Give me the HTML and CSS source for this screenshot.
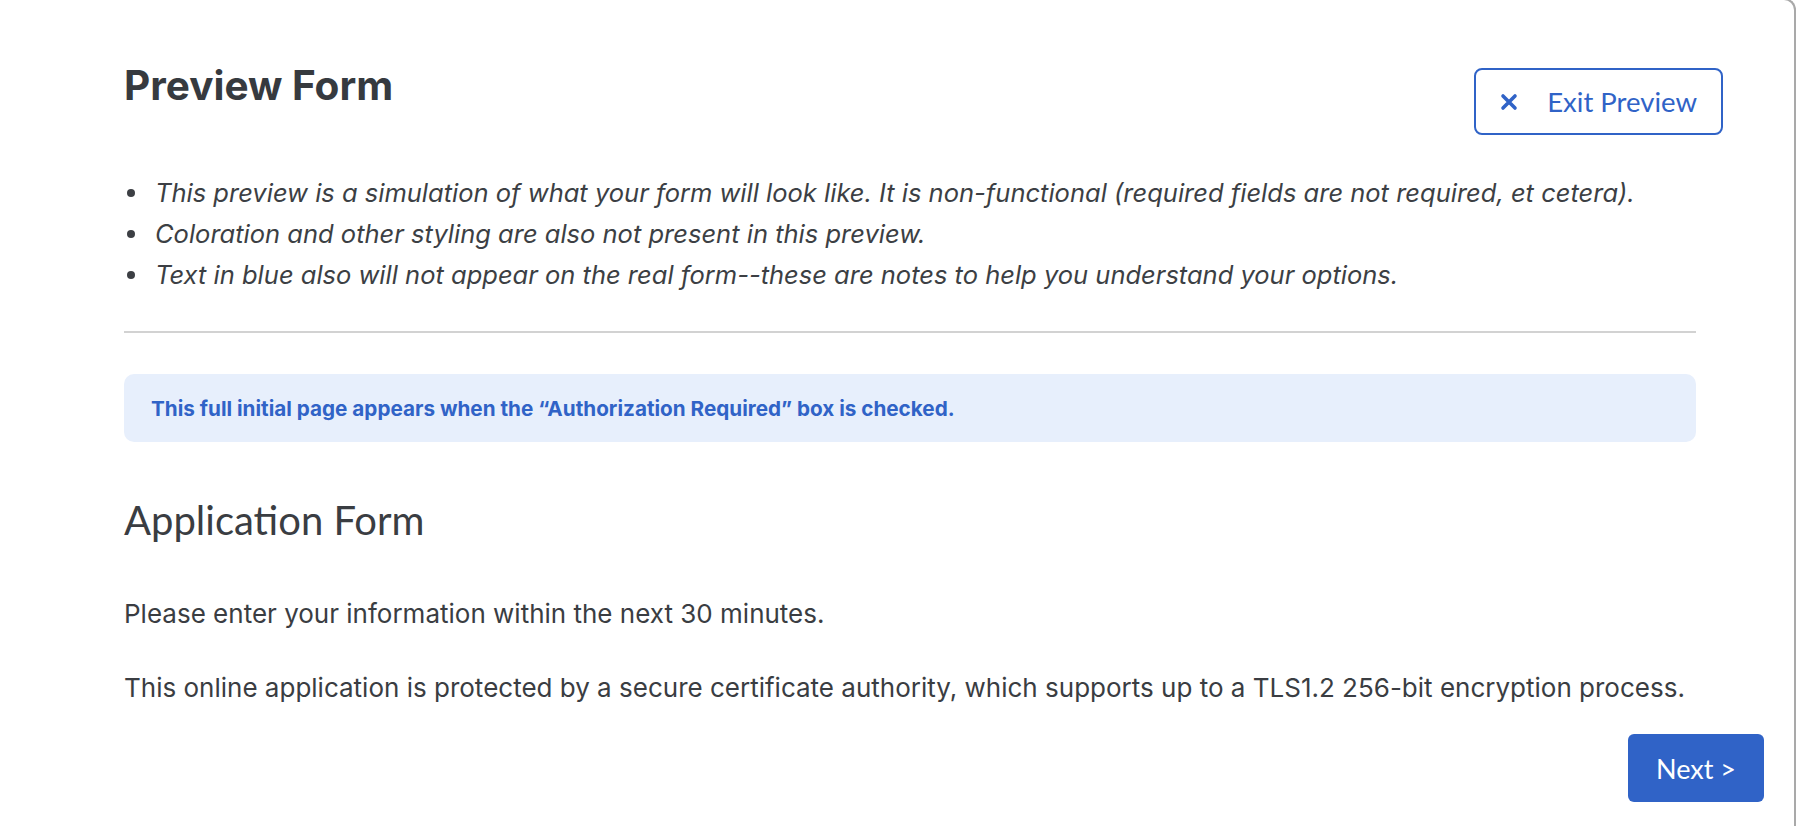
FILE: index.html
```html
<!DOCTYPE html>
<html lang="en">
<head>
<meta charset="utf-8">
<title>Preview Form</title>
<link rel="stylesheet" href="styles.css">
</head>
<body>
<div class="card">
  <header class="top">
    <h1 class="title">Preview Form</h1>
    <button class="btn-outline" type="button">
      <svg class="x-icon" width="18" height="18" viewBox="0 0 18 18" aria-hidden="true"><path d="M3 3 L15 15 M15 3 L3 15" stroke="currentColor" stroke-width="3.6" stroke-linecap="round" fill="none"/></svg>
      <span>Exit Preview</span>
    </button>
  </header>
  <main class="content">
    <ul class="notes">
      <li>This preview is a simulation of what your form will look like. It is non-functional (required fields are not required, et cetera).</li>
      <li>Coloration and other styling are also not present in this preview.</li>
      <li>Text in blue also will not appear on the real form--these are notes to help you understand your options.</li>
    </ul>
    <hr class="divider">
    <div class="info">This full initial page appears when the “Authorization Required” box is checked.</div>
    <h2 class="form-title">Application Form</h2>
    <p class="para">Please enter your information within the next 30 minutes.</p>
    <p class="para">This online application is protected by a secure certificate authority, which supports up to a TLS1.2 256-bit encryption process.</p>
  </main>
  <footer class="actions">
    <button class="btn-primary" type="button">Next &gt;</button>
  </footer>
</div>
</body>
</html>
```

FILE: styles.css
```css
html, body {
  margin: 0;
  padding: 0;
  background: #ffffff;
}

body {
  font-family: "Inter", "Lato", sans-serif;
  color: #3a3d42;
  overflow: hidden;
}

.card {
  box-sizing: border-box;
  width: 1796px;
  height: 830px;
  margin-top: -2px;
  border-top: 2px solid #a9a9a9;
  border-right: 2px solid #a9a9a9;
  border-top-right-radius: 12px;
  background: #ffffff;
}

.top {
  display: flex;
  justify-content: space-between;
  align-items: flex-start;
  padding: 62px 71px 0 124px;
}

.title {
  margin: 0;
  font-family: "Inter", "Lato", sans-serif;
  font-size: 40.5px;
  line-height: 48px;
  font-weight: 700;
  color: #363a3f;
}

.btn-outline {
  margin-top: 6px;
  height: 67px;
  box-sizing: border-box;
  display: flex;
  align-items: center;
  gap: 29px;
  padding: 0 24px;
  border: 2px solid #3063c7;
  border-radius: 8px;
  background: #ffffff;
  color: #3063c7;
  font-family: "Lato", "Open Sans", sans-serif;
  font-size: 27.5px;
  font-weight: 400;
  line-height: 1;
  cursor: pointer;
}

.x-icon {
  flex: none;
  display: block;
}

.content {
  padding: 0 98px 0 124px;
}

.notes {
  list-style: none;
  margin: 37px 0 0;
  padding: 0;
  font-family: "Inter", "Lato", sans-serif;
  font-style: italic;
  font-size: 25.5px;
  line-height: 41px;
  color: #3c3f44;
}

.notes li {
  display: flex;
  align-items: center;
  padding-left: 3px;
}

.notes li::before {
  content: "";
  flex: none;
  width: 8px;
  height: 8px;
  border-radius: 50%;
  background: #3c3f44;
  margin-right: 20px;
}

.divider {
  margin: 36px 0 0;
  border: 0;
  height: 2px;
  background: #d2d2d2;
}

.info {
  margin-top: 41px;
  height: 68px;
  box-sizing: border-box;
  display: flex;
  align-items: center;
  padding: 0 27px;
  background: #e7effc;
  border-radius: 10px;
  color: #3063c7;
  font-family: "Inter", "Lato", sans-serif;
  font-weight: 700;
  font-size: 20.7px;
}

.form-title {
  margin: 54px 0 0;
  font-family: "Lato", "Open Sans", sans-serif;
  font-size: 40px;
  line-height: 48px;
  font-weight: 400;
  color: #3a3d42;
}

.para {
  margin: 52px 0 0;
  font-family: "Inter", "Lato", sans-serif;
  font-size: 26px;
  line-height: 36px;
}

.para + .para {
  margin-top: 38px;
}

.actions {
  display: flex;
  justify-content: flex-end;
  padding: 28px 30px 0 0;
}

.btn-primary {
  height: 68px;
  box-sizing: border-box;
  padding: 0 28px;
  border: 0;
  border-radius: 6px;
  background: #3063c7;
  color: #ffffff;
  font-family: "Lato", "Open Sans", sans-serif;
  font-size: 27px;
  font-weight: 400;
  cursor: pointer;
}
```
